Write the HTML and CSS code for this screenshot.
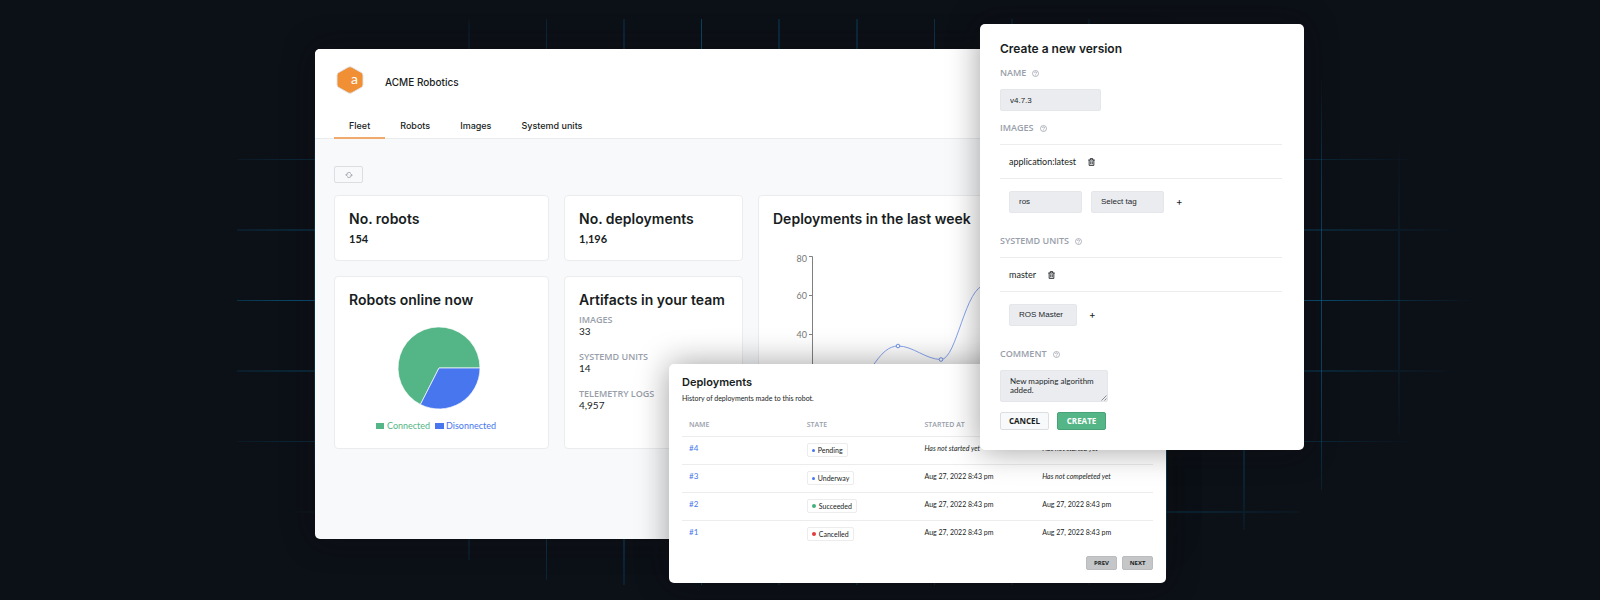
FILE: index.html
```html
<!DOCTYPE html>
<html lang="en">
<head>
<meta charset="utf-8">
<meta name="viewport" content="width=device-width, initial-scale=1">
<title>ACME Robotics</title>
<link rel="stylesheet" href="styles.css">
</head>
<body>
<div class="stage">
  <svg class="grid-lines" viewBox="0 0 1600 600" preserveAspectRatio="xMidYMid slice" aria-hidden="true">
    <defs>
      <radialGradient id="glow" gradientUnits="userSpaceOnUse" cx="0" cy="0" r="1" gradientTransform="translate(810 300) scale(665 350)">
        <stop offset="0" stop-color="#07608c"/>
        <stop offset="0.75" stop-color="#07608c" stop-opacity="0.85"/>
        <stop offset="1" stop-color="#07608c" stop-opacity="0"/>
      </radialGradient>
    </defs>
    <g stroke="url(#glow)" fill="none">
      <path stroke-width="1" stroke-opacity="0.9" d="M701.5 19V585M1321.5 80V490M1166.5 30V570M237 300.5H1475"/>
      <path stroke-width="1" stroke-opacity="0.6" d="M546.5 19V580M237 159.5H1445M237 441.5H1430M314.5 120V480M934.5 19V585"/>
      <path stroke-width="2" stroke-opacity="0.4" d="M469 19V560M624 19V585M779 19V585M857 19V585M1012 19V585M1089 19V585M1244 60V530M1399 130V435M237 230H1510M237 371H1490M237 512H1300"/>
    </g>
  </svg>

  <main class="window dashboard">
    <header class="dash-header">
      <div class="brand">
        <svg class="brand-logo" viewBox="0 0 32 32" role="img" aria-label="ACME logo">
          <path d="M14.2 3.2q1.8-1 3.6 0l9.4 5.2q1.8 1 1.8 3v9.2q0 2-1.8 3l-9.4 5.2q-1.8 1-3.6 0l-9.4-5.2q-1.8-1-1.8-3v-9.2q0-2 1.8-3z" fill="#f08f34" stroke="#dfe3e8" stroke-width="1"/>
          <text x="17" y="20" class="logo-letter">a</text>
        </svg>
        <span class="brand-name">ACME Robotics</span>
      </div>
      <nav class="tabs">
        <a class="tab tab-active" href="#fleet">Fleet</a>
        <a class="tab" href="#robots">Robots</a>
        <a class="tab" href="#images">Images</a>
        <a class="tab" href="#units">Systemd units</a>
      </nav>
    </header>
    <div class="dash-body">
      <button class="refresh" type="button" aria-label="Refresh">
        <svg viewBox="0 0 16 16" class="refresh-icon" fill="none" stroke="currentColor" stroke-width="1.5"><path d="M3 8a5 5 0 0 1 9-3M13 8a5 5 0 0 1-9 3M0.5 7L3 9.5 5.500 7M10.500 9L13 6.500 15.500 9"/></svg>
      </button>
      <div class="cards">
        <section class="card">
          <h2 class="card-title">No. robots</h2>
          <p class="card-number">154</p>
        </section>
        <section class="card">
          <h2 class="card-title">No. deployments</h2>
          <p class="card-number">1,196</p>
        </section>
        <section class="card card-tall">
          <h2 class="card-title">Deployments in the last week</h2>
          <svg class="chart" viewBox="0 1 359 206" role="img" aria-label="Deployments per day">
            <path d="M36 29.500h3.500V185.500M36 68.500h3.500M36 107.500h3.500M36 146.500h3.500M36 185.500h310" fill="none" stroke="#808080"/>
            <g class="axis-label">
              <text x="34" y="35">80</text>
              <text x="34" y="72">60</text>
              <text x="34" y="111">40</text>
              <text x="34" y="150">20</text>
            </g>
            <path d="M39 185C55 185 68 182 82 165C97 147 107 119 125 119C140 119 153 132.500 168 132.500C184 132.500 192 58 213 58C230 58 240 110 256 110" fill="none" stroke="#86a4f0"/>
            <g fill="#fff" stroke="#6f93ee"><circle cx="125" cy="119" r="1.800"/><circle cx="168" cy="132.500" r="1.800"/></g>
          </svg>
        </section>
        <section class="card">
          <h2 class="card-title">Robots online now</h2>
          <svg class="chart" viewBox="0 1 185 125" role="img" aria-label="Connected and disconnected robots">
            <path d="M90 60H131A41 41 0 1 0 71.400 96.500Z" fill="#54b586" stroke="#fff" stroke-width="0.700"/>
            <path d="M90 60H131A41 41 0 0 1 71.400 96.500Z" fill="#4776ee" stroke="#fff" stroke-width="0.700"/>
            <path d="M27 115h8v6h-8z" fill="#54b586"/>
            <path d="M86 115h9v6h-9z" fill="#4776ee"/>
            <text class="legend legend-on" x="38" y="121">Connected</text>
            <text class="legend legend-off" x="97" y="121">Disonnected</text>
          </svg>
        </section>
        <section class="card">
          <h2 class="card-title">Artifacts in your team</h2>
          <dl class="facts">
            <div><dt class="label">IMAGES</dt><dd>33</dd></div>
            <div><dt class="label">SYSTEMD UNITS</dt><dd>14</dd></div>
            <div><dt class="label">TELEMETRY LOGS</dt><dd>4,957</dd></div>
          </dl>
        </section>
      </div>
    </div>
  </main>

  <section class="window deployments">
    <h2 class="panel-title">Deployments</h2>
    <p class="panel-note">History of deployments made to this robot.</p>
    <table class="runs">
      <thead>
        <tr><th>NAME</th><th>STATE</th><th>STARTED AT</th><th aria-label="Completed at"></th></tr>
      </thead>
      <tbody>
        <tr><td><a href="#4">#4</a></td><td><span class="badge"><i class="dot"></i>Pending</span></td><td><em>Has not started yet</em></td><td><em>Has not started yet</em></td></tr>
        <tr><td><a href="#3">#3</a></td><td><span class="badge"><i class="dot"></i>Underway</span></td><td>Aug 27, 2022 8:43 pm</td><td><em>Has not compeleted yet</em></td></tr>
        <tr><td><a href="#2">#2</a></td><td><span class="badge"><i class="dot dot-ok"></i>Succeeded</span></td><td>Aug 27, 2022 8:43 pm</td><td>Aug 27, 2022 8:43 pm</td></tr>
        <tr><td><a href="#1">#1</a></td><td><span class="badge"><i class="dot dot-bad"></i>Cancelled</span></td><td>Aug 27, 2022 8:43 pm</td><td>Aug 27, 2022 8:43 pm</td></tr>
      </tbody>
    </table>
    <div class="pager">
      <button class="page-button" type="button">PREV</button>
      <button class="page-button" type="button">NEXT</button>
    </div>
  </section>

  <form class="window version">
    <svg class="symbols" aria-hidden="true">
      <symbol id="help" viewBox="0 0 14 14"><g fill="none" stroke="currentColor" stroke-width="1.300"><circle cx="7" cy="7" r="6"/><path d="M5 5.700a2 2 0 1 1 2.800 1.800q-.8.400-.8 1.200M7 9.700v1.200"/></g></symbol>
      <symbol id="trash" viewBox="0 0 14 16"><g fill="none" stroke="currentColor" stroke-width="1.700"><path d="M0.500 4h13M4.500 4V1.200h5V4M2.300 4v10.800h9.400V4M5.500 6.500v6M8.500 6.500v6"/></g></symbol>
    </svg>
    <h2 class="version-title">Create a new version</h2>
    <div class="field-head"><label class="label" for="name">NAME</label><svg class="help"><use href="#help"/></svg></div>
    <input class="control name-input" id="name" type="text" value="v4.7.3">
    <div class="field-head"><label class="label" for="image">IMAGES</label><svg class="help"><use href="#help"/></svg></div>
    <div class="item"><span>application:latest</span><button class="icon-button" type="button" aria-label="Remove application:latest"><svg class="trash"><use href="#trash"/></svg></button></div>
    <div class="adder">
      <select class="control image-select" id="image"><option>ros</option></select>
      <select class="control image-select" aria-label="Tag"><option>Select tag</option></select>
      <button class="icon-button add" type="button" aria-label="Add image">+</button>
    </div>
    <div class="field-head"><label class="label" for="unit">SYSTEMD UNITS</label><svg class="help"><use href="#help"/></svg></div>
    <div class="item"><span>master</span><button class="icon-button" type="button" aria-label="Remove master"><svg class="trash"><use href="#trash"/></svg></button></div>
    <div class="adder">
      <select class="control unit-select" id="unit"><option>ROS Master</option></select>
      <button class="icon-button add" type="button" aria-label="Add unit">+</button>
    </div>
    <div class="field-head"><label class="label" for="comment">COMMENT</label><svg class="help"><use href="#help"/></svg></div>
    <div class="comment-box">
      <textarea class="control comment" id="comment">New mapping algorithm added.</textarea>
      <svg class="grip" viewBox="0 0 6 6" aria-hidden="true"><path d="M0.500 5.500l5-5M3.500 5.500l2-2" fill="none" stroke="#666" stroke-width="0.700"/></svg>
    </div>
    <div class="actions">
      <button class="action" type="button">CANCEL</button>
      <button class="action action-primary" type="submit">CREATE</button>
    </div>
  </form>
</div>
</body>
</html>
```

FILE: styles.css
```css
* { box-sizing: border-box; }

body {
  margin: 0;
  background: #0c1017;
  color: #181d22;
  font-family: Lato, sans-serif;
}

h2, p, dl, dd { margin: 0; }
button { font-family: inherit; cursor: pointer; }

.stage {
  position: relative;
  min-height: 600px;
  overflow: hidden;
}

.grid-lines {
  position: absolute;
  inset: 0;
  width: 100%;
  height: 100%;
}

.window {
  position: absolute;
  background: #fff;
  border-radius: 5px;
  box-shadow: 0 0 32px rgba(16, 16, 16, 0.4);
}

.label {
  color: #989eaa;
  font-size: 9px;
  line-height: 12px;
  font-weight: 600;
  font-family: "Open Sans", sans-serif;
}

/* Dashboard */
.dashboard {
  left: 19.6875%;
  top: 49px;
  width: 53.1875%;
  min-height: 490px;
  background: #f8f9fb;
  overflow: hidden;
}

.dash-header {
  padding: 15px 19px 0;
  background: #fff;
  box-shadow: inset 0 -1px #e9ebed;
}

.brand {
  display: flex;
  align-items: center;
  gap: 19px;
}

.brand-logo { width: 32px; height: 32px; }

.logo-letter {
  fill: #fff;
  font-size: 14px;
}

.brand-name {
  padding-top: 3px;
  font-size: 10px;
  line-height: 14px;
  font-weight: 500;
  font-family: Inter, sans-serif;
}

.tabs {
  display: flex;
  margin-top: 23px;
}

.tab {
  padding: 0 15px 4px;
  border-bottom: 2px solid transparent;
  color: #181d22;
  font: 500 9px/14px Inter, sans-serif;
  text-decoration: none;
}

.tab-active { border-bottom-color: #f0ab6c; }

.dash-body { padding: 27px 19px 20px; }

.refresh {
  display: flex;
  align-items: center;
  justify-content: center;
  width: 29px;
  height: 17px;
  padding: 0;
  border: 1px solid #dcdfe2;
  border-radius: 2px;
  background: #f8f9fb;
  color: #8b9097;
}

.refresh-icon { width: 8px; height: 8px; }

.cards {
  display: grid;
  grid-template-columns: 215fr 179fr 389fr;
  gap: 15px;
  margin-top: 12px;
}

.card {
  min-width: 0;
  padding: 14px;
  border: 1px solid #eaecee;
  border-radius: 4px;
  background: #fff;
}

.card-tall { grid-column: 3; grid-row: 1 / 3; }

.card-title {
  font-size: 14px;
  line-height: 18px;
  font-weight: 600;
  font-family: Inter, sans-serif;
  white-space: nowrap;
}

.card-number {
  margin-top: 4px;
  font-size: 11px;
  line-height: 14px;
  font-weight: 700;
}

.chart { display: block; width: 100%; }
.axis-label { fill: #777; font-size: 9px; text-anchor: end; }
.legend { font-size: 9px; }
.legend-on { fill: #54b586; }
.legend-off { fill: #4776ee; }

.facts {
  display: grid;
  gap: 15px;
  margin-top: 5px;
  font-size: 10px;
  line-height: 10px;
}

/* Deployments */
.deployments {
  left: 41.8125%;
  top: 364px;
  width: 31.0625%;
  padding: 11px 13px 13px;
}

.panel-title {
  font: 600 11px/14px Inter, sans-serif;
}

.panel-note {
  margin-top: 4px;
  font-size: 7px;
  line-height: 10px;
}

.runs {
  width: 100%;
  margin-top: 10px;
  border-collapse: separate;
  border-spacing: 0;
  table-layout: fixed;
  font-size: 7px;
  line-height: 10px;
}

.runs th {
  height: 24px;
  padding: 0 7px;
  border-bottom: 1px solid #ececec;
  color: #989eaa;
  font-weight: 600;
  font-family: "Open Sans", sans-serif;
  text-align: left;
}

.runs td {
  height: 28px;
  padding: 6px 7px 0;
  border-bottom: 1px solid #ececec;
  vertical-align: top;
  white-space: nowrap;
}

.runs tr:last-child td { border-bottom-color: transparent; }
.runs a { color: #4776ee; font-size: 8px; text-decoration: none; }

.badge {
  display: flex;
  align-items: center;
  gap: 3px;
  width: fit-content;
  height: 14px;
  padding: 0 4px;
  border: 1px solid #ececec;
  border-radius: 2px;
}

.dot {
  width: 3px;
  height: 3px;
  border-radius: 50%;
  background: #4776ee;
}

.dot-ok { width: 4px; height: 4px; background: #45b07c; }
.dot-bad { width: 4px; height: 4px; background: #e13b3b; }

.pager {
  display: flex;
  justify-content: flex-end;
  gap: 5px;
  margin-top: 7px;
}

.page-button {
  width: 31px;
  height: 14px;
  padding: 0;
  border: 1px solid #babcbe;
  border-radius: 2px;
  background: #c4c6c8;
  color: #181d22;
  font: 700 6px/10px "Open Sans", sans-serif;
}

/* Version form */
.version {
  left: 61.25%;
  top: 24px;
  width: 20.25%;
  padding: 17px 22px 20px 20px;
}

.symbols { position: absolute; width: 0; height: 0; }

.version-title {
  font: 600 12px/16px Inter, sans-serif;
  margin-bottom: 10px;
}

.field-head {
  display: flex;
  align-items: center;
  gap: 6px;
  height: 12px;
  margin-bottom: 10px;
}

.help { width: 7px; height: 7px; color: #8b919d; }

.control {
  display: block;
  height: 22px;
  padding: 0 9px;
  border: 1px solid #e4e6e9;
  border-radius: 2px;
  background: #ebecef;
  color: #23282d;
  font: 8px/10px "Liberation Sans", sans-serif;
  appearance: none;
}

.name-input { width: 101px; margin-bottom: 11px; }
.image-select { width: 73px; }
.unit-select { width: 68px; }

.item {
  display: flex;
  align-items: center;
  gap: 12px;
  height: 35px;
  padding: 0 9px;
  border: solid #ececec;
  border-width: 1px 0;
  font-size: 9px;
  line-height: 12px;
}

.icon-button {
  display: flex;
  padding: 0;
  border: 0;
  background: none;
  color: #181d22;
}

.trash { width: 7px; height: 8px; }

.adder {
  display: flex;
  align-items: center;
  gap: 9px;
  margin: 12px 9px 22px;
}

.add { padding: 0 0 3px 3px; font: 10px/12px Inter, sans-serif; }

.comment-box {
  position: relative;
  width: 108px;
  margin-bottom: 10px;
}

.comment {
  width: 100%;
  height: 32px;
  padding: 6px 9px;
  font: 8px/9px Lato, sans-serif;
  overflow: hidden;
  resize: none;
}

.grip {
  position: absolute;
  right: 1px;
  bottom: 1px;
  width: 6px;
  height: 6px;
}

.actions { display: flex; gap: 8px; }

.action {
  width: 49px;
  height: 18px;
  padding: 0;
  border: 1px solid #dcdfe2;
  border-radius: 2px;
  background: #f8f9fb;
  color: #181d22;
  font: 700 8px/10px "Open Sans", sans-serif;
}

.action-primary {
  border-color: #47a377;
  background: #54b586;
  color: #fff;
}
```
